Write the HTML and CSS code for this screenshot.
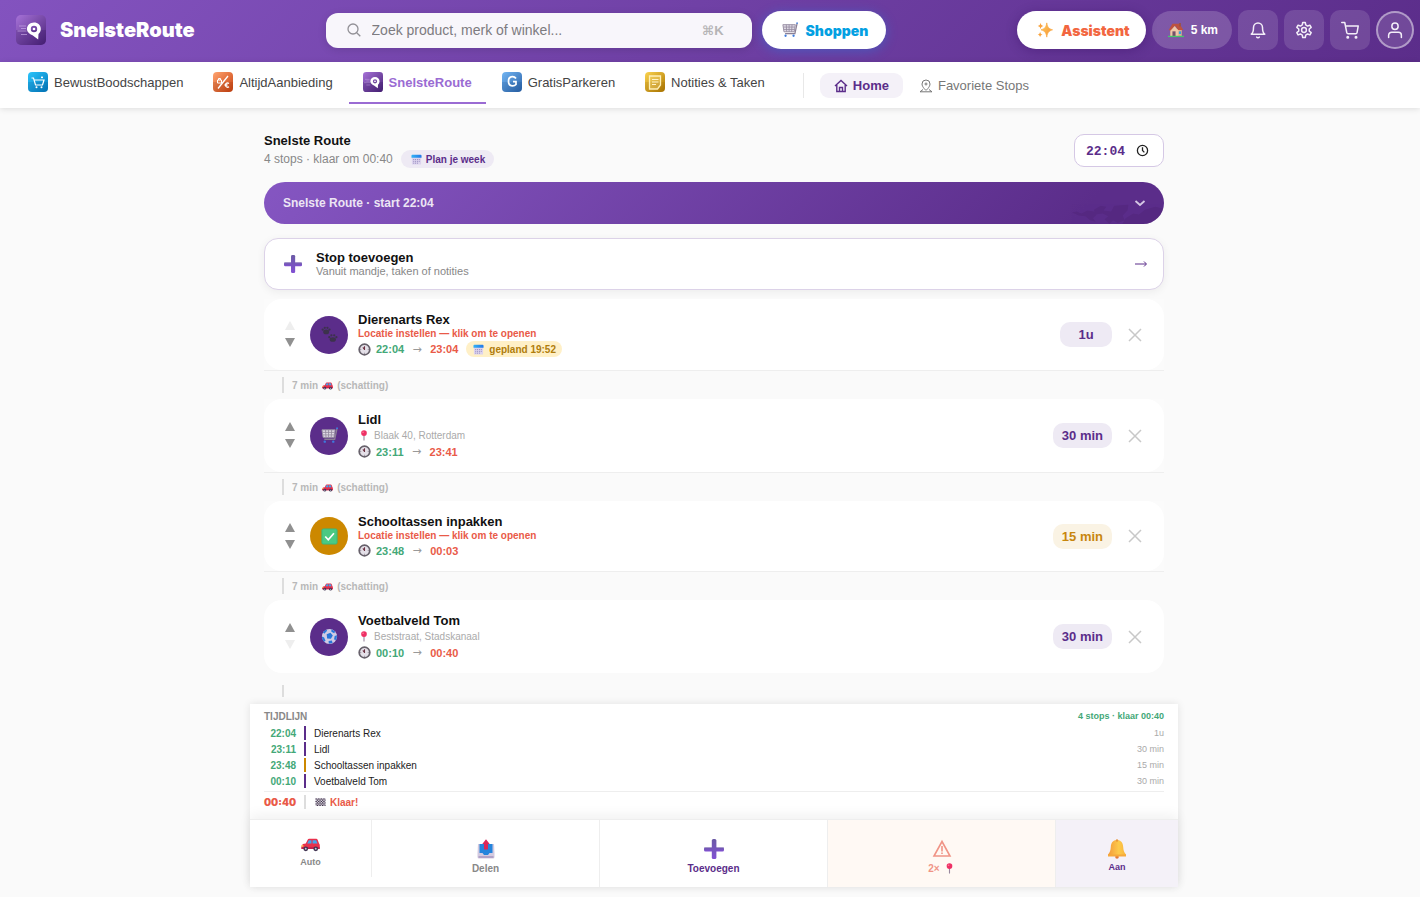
FILE: index.html
```html
<!DOCTYPE html>
<html lang="nl">
<head>
<meta charset="utf-8">
<meta name="viewport" content="width=device-width, initial-scale=1">
<title>SnelsteRoute</title>
<link rel="stylesheet" href="styles.css">
</head>
<body>
<svg class="sprite" aria-hidden="true">
  <defs>
    <linearGradient id="g-purple" x1="0" y1="0" x2="1" y2="1"><stop offset="0" stop-color="#a672d8"/><stop offset="1" stop-color="#4b2378"/></linearGradient>
    <linearGradient id="g-blue" x1="0" y1="0" x2="1" y2="1"><stop offset="0" stop-color="#2cc4fb"/><stop offset="1" stop-color="#0279bd"/></linearGradient>
    <linearGradient id="g-orange" x1="0" y1="0" x2="1" y2="1"><stop offset="0" stop-color="#ffa470"/><stop offset="1" stop-color="#c8400f"/></linearGradient>
    <linearGradient id="g-sky" x1="0" y1="0" x2="1" y2="1"><stop offset="0" stop-color="#72b5f3"/><stop offset="1" stop-color="#2a62a8"/></linearGradient>
    <linearGradient id="g-gold" x1="0" y1="0" x2="1" y2="1"><stop offset="0" stop-color="#fbd34e"/><stop offset="1" stop-color="#ad7600"/></linearGradient>
    <linearGradient id="g-plus" x1="0" y1="0" x2="0" y2="1"><stop offset="0" stop-color="#6b5aa5"/><stop offset="1" stop-color="#8250d4"/></linearGradient>
    <linearGradient id="g-bell" x1="0" y1="0" x2="1" y2="0"><stop offset="0" stop-color="#f39a3c"/><stop offset=".6" stop-color="#fdca4b"/><stop offset="1" stop-color="#f8b33c"/></linearGradient>
    <linearGradient id="g-star" x1="0" y1="0" x2="1" y2="1"><stop offset="0" stop-color="#ffd35c"/><stop offset="1" stop-color="#f58a35"/></linearGradient>
    <linearGradient id="g-cal" x1="0" y1="0" x2="1" y2="0"><stop offset="0" stop-color="#35b3f5"/><stop offset="1" stop-color="#2377e8"/></linearGradient>
  </defs>
  <symbol id="app-route" viewBox="0 0 30 30">
    <rect width="30" height="30" rx="5" fill="url(#g-purple)"/>
    <path d="M0 15h30v10a5 5 0 0 1-5 5H5a5 5 0 0 1-5-5z" fill="#2f0f5c" opacity=".22"/>
    <path d="M3 11h7M5 13.500h5M1.500 16h9M5 19.500h6" stroke="#d3b6ef" stroke-width="1" opacity=".6"/>
    <path fill="#fff" fill-rule="evenodd" d="M18 7.500c-3.900 0-7 2.800-7 6.400 0 3.200 2.600 5 5.500 6.300l5.700 4.300.3-5.400c1.500-1.400 2.300-3.100 2.300-5.200 0-3.800-3-6.400-6.800-6.400zm0 3.300a3.200 3.200 0 1 1 0 6.400 3.200 3.200 0 0 1 0-6.400z"/>
    <circle cx="18" cy="14" r="1.300" fill="#fff"/>
  </symbol>
  <symbol id="app-shop" viewBox="0 0 20 20">
    <rect width="20" height="20" rx="4" fill="url(#g-blue)"/><path d="M0 10h20v6a4 4 0 0 1-4 4H4a4 4 0 0 1-4-4z" fill="#004a88" opacity=".15"/>
    <path d="M3.500 6h2l2 7h7l1.500-5H6.500M14 4.500v1.800M13 5.400h2" fill="none" stroke="#fff" stroke-width="1.200"/><circle cx="8.500" cy="15.200" r="1" fill="#fff"/><circle cx="13.500" cy="15.200" r="1" fill="#fff"/>
  </symbol>
  <symbol id="app-deal" viewBox="0 0 20 20">
    <rect width="20" height="20" rx="4" fill="url(#g-orange)"/><path d="M0 10h20v6a4 4 0 0 1-4 4H4a4 4 0 0 1-4-4z" fill="#7a2000" opacity=".15"/>
    <path d="M15 4 5 16.500" fill="none" stroke="#fff" stroke-width="1.300"/><path d="M4.500 8h4v3h-4zM5.500 8V6.500h2V8" fill="none" stroke="#fff" stroke-width="1"/><path d="M16 11.500c-1.500-1-3.500-.5-3.500 1.500s2 2.800 3.500 1.800M11.500 13h3" fill="none" stroke="#fff" stroke-width="1.300"/>
  </symbol>
  <symbol id="app-park" viewBox="0 0 20 20">
    <rect width="20" height="20" rx="4" fill="url(#g-sky)"/><path d="M0 10h20v6a4 4 0 0 1-4 4H4a4 4 0 0 1-4-4z" fill="#0b3a7a" opacity=".15"/>
    <path d="M14 6.500C13.200 5.300 12 4.600 10.600 4.600 8.100 4.600 6.500 6.400 6.500 9.200s1.600 4.600 4.100 4.600c1.300 0 2.500-.4 3.400-1.300V9.700h-3" fill="none" stroke="#fff" stroke-width="1.700"/>
  </symbol>
  <symbol id="app-note" viewBox="0 0 20 20">
    <rect width="20" height="20" rx="4" fill="url(#g-gold)"/><path d="M0 10h20v6a4 4 0 0 1-4 4H4a4 4 0 0 1-4-4z" fill="#8a5b00" opacity=".15"/>
    <path d="M4.500 4h11v9l-3 4h-8z" fill="#f9dc81" fill-opacity=".35" stroke="#fff0b8" stroke-width="1.300"/><path d="M7 7.500h6.500M7 10h6.500M7 12.500h4" stroke="#fff3c8" stroke-width="1.100"/>
  </symbol>
  <symbol id="e-cart" viewBox="0 0 18 18">
    <path d="M17 1.500 14.500 13H3.500" fill="none" stroke="#8a7f95" stroke-width="1.400"/><path d="M1 3h14l-1.200 8H2.200z" fill="#e0dbe6" stroke="#93899e" stroke-width="1"/>
    <path d="M1.500 5.700h13M2 8.400h12M4.800 3l.5 8M8 3v8M11.300 3l-.5 8" stroke="#93899e" stroke-width=".9"/><circle cx="4" cy="15.500" r="1.300" fill="#3d7bdc"/><circle cx="13" cy="15.500" r="1.300" fill="#3d7bdc"/><path d="M16 1.300h2" stroke="#3d7bdc" stroke-width="1.500"/>
  </symbol>
  <symbol id="e-spark" viewBox="0 0 18 18">
    <path d="M11 1c.9 5 2 6.400 6.500 7.800C13 10.200 11.900 11.800 11 17c-.9-5.200-2-6.800-6.500-8.200C9 7.400 10.100 6 11 1z" fill="url(#g-star)" stroke="#f9a840" stroke-width=".8"/>
    <path d="M4 .8c.5 2.400 1 3 3.200 3.700C5 5.200 4.500 5.800 4 8.200 3.500 5.800 3 5.200.8 4.500 3 3.800 3.500 3.200 4 .8zM3.500 11c.4 2 .9 2.600 2.700 3.100-1.800.6-2.300 1.200-2.700 3-.4-1.800-.9-2.400-2.700-3C2.600 13.600 3.100 13 3.500 11z" fill="#f9a23c"/>
  </symbol>
  <symbol id="e-home" viewBox="0 0 18 18">
    <path d="M2.500 8h13v8h-13z" fill="#dcae91"/><path d="M.8 9 5 2h8l4.200 7h-6L8.500 4.500 3 9.800z" fill="#bd523f"/><path d="M3 9.500 7.500 4.500l4.200 5V16H3z" fill="#efc7a7"/><path d="M5 10.500h3.500V16H5z" fill="#755069"/><path d="M12.200 10.500h2.500v3h-2.500z" fill="#32a6dc"/><path d="M12.500 1h2v4h-2z" fill="#9b5344"/><path d="M0 15.500h18v1.500H0z" fill="#44c76c"/>
  </symbol>
  <symbol id="e-cal" viewBox="0 0 12 12">
    <rect x="1" y="1" width="10" height="10.500" rx="1" fill="#dcd3ee"/><path d="M.5 4V1.800A1 1 0 0 1 1.500.8h9a1 1 0 0 1 1 1V4z" fill="url(#g-cal)"/><path d="M2.500 6h7M2.500 8h7M2.500 10h5" stroke="#8d82b8" stroke-width="1" stroke-dasharray="1 1"/>
  </symbol>
  <symbol id="e-plus" viewBox="0 0 20 20">
    <rect x="0" y="8" width="20" height="4.500" rx="1.500" fill="url(#g-plus)"/><rect x="7.800" y="0" width="4.600" height="20" rx="1.500" fill="url(#g-plus)"/><path d="M1 8.500h6.800M12.400 8.500h6.800" stroke="#a99acd" stroke-width="1"/>
  </symbol>
  <symbol id="e-paws" viewBox="0 0 18 18">
    <g fill="#3c324c"><ellipse cx="5.500" cy="6.300" rx="3.200" ry="2.500"/><circle cx="1.800" cy="3.800" r="1.200"/><circle cx="4" cy="1.900" r="1.200"/><circle cx="6.800" cy="1.900" r="1.200"/><circle cx="9" cy="3.800" r="1.200"/><ellipse cx="12.500" cy="14.300" rx="3.300" ry="2.500"/><circle cx="8.800" cy="11.800" r="1.200"/><circle cx="11" cy="9.900" r="1.200"/><circle cx="14" cy="9.900" r="1.200"/><circle cx="16.300" cy="11.800" r="1.200"/></g>
  </symbol>
  <symbol id="e-check" viewBox="0 0 18 18"><rect x="1" y="1" width="16" height="16" rx="1.500" fill="#4bc983" stroke="#36b67c" stroke-width="1"/><path d="m4.500 9 3.200 3.500 6-7" fill="none" stroke="#fff" stroke-width="1.800"/></symbol>
  <symbol id="e-ball" viewBox="0 0 18 18"><circle cx="9" cy="9" r="8" fill="#cfcbe4"/><path d="m6 6.500 4-1.500 2.500 3-2 3.500-4-.5zM2 4.500 5.500 1.500 6.500 3 3.500 6zM11 1.300l4 2.400-1 1.800-3-1.500zM14.500 8.500l2.500-.8-.8 5-2.400-.5zM1 9l2.300 1 1.500 3.500-1.500 1C1.800 13 1 11 1 9zM8 13.800l3.500-.5.8 2.700-4 .8z" fill="#2875d9"/></symbol>
  <symbol id="e-clock" viewBox="0 0 12 12"><circle cx="6" cy="6" r="4.900" fill="#e4e0e8" stroke="#67616b" stroke-width="1.600"/><path d="M6 6.500V3M6 6 4.500 4" stroke="#6c3142" stroke-width="1"/><path d="M10 6H9M6 10V9M2 6h1" stroke="#8d8792" stroke-width=".8"/></symbol>
  <symbol id="e-pin" viewBox="0 0 12 12"><path d="M6 6v5.500" stroke="#98889e" stroke-width="1.200"/><circle cx="6" cy="3.400" r="3.100" fill="#ee3065"/><circle cx="5" cy="2.500" r=".9" fill="#ff7d98"/></symbol>
  <symbol id="e-car" viewBox="0 0 20 14"><path d="M.5 8 2 6l3-.5L7 1.500Q7.500.5 8.500.5H16q1 0 1.500 1L19 5.500q.8.500.8 2v3q0 .8-1 .8H1.500q-1 0-1-1z" fill="#e8304c"/><path d="M6.500 5.500 8.200 2H11v3.500zM12.200 2H16l1.400 3.500h-5.200z" fill="#42a5ed"/><path d="M.4 9.500h19.400V11H.4z" fill="#b51b4d"/><path d="M.5 7.200h2v1.600h-2z" fill="#ffd052"/><circle cx="5" cy="11" r="2.500" fill="#403351"/><circle cx="15.500" cy="11" r="2.500" fill="#403351"/><circle cx="5" cy="11" r="1" fill="#cac2d4"/><circle cx="15.500" cy="11" r="1" fill="#cac2d4"/></symbol>
  <symbol id="e-flag" viewBox="0 0 12 10"><rect x="1" y="1" width="10" height="8" fill="#d2ccd8"/><path d="M1 2h10M1 4.500h10M1 7h10" stroke="#3c3146" stroke-width="1.200" stroke-dasharray="1.300 1.300"/><path d="M2.300 3.200h8.700M2.300 5.800h8.700M2.300 8.300h8.700" stroke="#3c3146" stroke-width="1.200" stroke-dasharray="1.300 1.300"/></symbol>
  <symbol id="e-out" viewBox="0 0 20 20"><path d="M2 5h16l.5 9v4a1.500 1.500 0 0 1-1.500 1.500H3A1.500 1.500 0 0 1 1.500 18v-4z" fill="#d3cae0"/><path d="M3.500 5h13v9h-3l-1.500 2H8l-1.500-2h-3z" fill="#2484dc"/><path d="M2.500 17h15v2h-15z" fill="#b1a2c7"/><path d="M8 10.500V5H6.300L10 .3 13.700 5H12v5.500z" fill="#db2658"/></symbol>
  <symbol id="e-bell" viewBox="0 0 20 20"><circle cx="10" cy="18" r="1.800" fill="#e37a38"/><path d="M10 1C5.800 1 4 4 3.800 8c-.1 3-1 5.500-2.800 7.500V17h18v-1.500C17.200 13.500 16.300 11 16.200 8 16 4 14.200 1 10 1z" fill="url(#g-bell)"/><path d="M1 15.500h18v2H1z" fill="#f6a93b"/><circle cx="10" cy="1.500" r="1.200" fill="#e9973c"/></symbol>
  <symbol id="i-x" viewBox="0 0 14 14"><path d="m1 1 12 12M13 1 1 13" stroke="currentColor" stroke-width="1.500"/></symbol>
</svg>

<header class="topbar">
  <a class="brand" href="#"><svg class="brand-logo" aria-hidden="true"><use href="#app-route"/></svg><span>SnelsteRoute</span></a>
  <div class="top-center">
    <label class="search">
      <svg class="search-icon" viewBox="0 0 14 14" fill="none" stroke="currentColor" stroke-width="1.300" aria-hidden="true"><circle cx="6" cy="6" r="5"/><path d="m9.700 9.700 3.600 3.600"/></svg>
      <input type="search" placeholder="Zoek product, merk of winkel..." aria-label="Zoeken">
      <kbd>⌘K</kbd>
    </label>
    <button class="pill pill-shop" type="button"><svg aria-hidden="true"><use href="#e-cart"/></svg>Shoppen</button>
  </div>
  <div class="top-right">
    <button class="pill pill-assist" type="button"><svg aria-hidden="true"><use href="#e-spark"/></svg>Assistent</button>
    <button class="pill-range" type="button"><svg aria-hidden="true"><use href="#e-home"/></svg>5 km</button>
    <button class="icon-btn" type="button" aria-label="Meldingen"><svg viewBox="0 0 24 24"><path d="M18 8.500a6 6 0 0 0-12 0c0 7-3 9-3 9h18s-3-2-3-9M13.700 21.500a2 2 0 0 1-3.400 0"/></svg></button>
    <button class="icon-btn" type="button" aria-label="Instellingen"><svg viewBox="0 0 24 24"><circle cx="12" cy="12" r="3.200"/><path d="M9.700 5.300 10.300 2h3.400l.6 3.300 2.400 1.400 3.200-1.100 1.700 2.900-2.600 2.200v2.700l2.600 2.100-1.700 3-3.200-1.200-2.400 1.400-.6 3.300h-3.400l-.6-3.300-2.400-1.400-3.200 1.200-1.700-3L5 13.400v-2.700L2.400 8.500l1.700-2.900 3.200 1.100z"/></svg></button>
    <button class="icon-btn" type="button" aria-label="Winkelwagen"><svg viewBox="0 0 24 24"><path d="M1 2h4l2.700 13.400a2 2 0 0 0 2 1.600h9.700a2 2 0 0 0 2-1.600L23 6.500H6"/><circle cx="9" cy="21.500" r="1"/><circle cx="20" cy="21.500" r="1"/></svg></button>
    <button class="avatar" type="button" aria-label="Profiel"><svg viewBox="0 0 24 24"><circle cx="12" cy="7" r="4.200"/><path d="M3.500 22v-3a4 4 0 0 1 4-4h9a4 4 0 0 1 4 4v3"/></svg></button>
  </div>
</header>

<nav class="navbar">
  <div class="tabs">
    <a class="tab" href="#"><svg aria-hidden="true"><use href="#app-shop"/></svg>BewustBoodschappen</a>
    <a class="tab" href="#"><svg aria-hidden="true"><use href="#app-deal"/></svg>AltijdAanbieding</a>
    <a class="tab active" href="#" aria-current="page"><svg aria-hidden="true"><use href="#app-route"/></svg>SnelsteRoute</a>
    <a class="tab" href="#"><svg aria-hidden="true"><use href="#app-park"/></svg>GratisParkeren</a>
    <a class="tab" href="#"><svg aria-hidden="true"><use href="#app-note"/></svg>Notities &amp; Taken</a>
  </div>
  <div class="subnav">
    <a class="sub active" href="#"><svg viewBox="0 0 14 14" aria-hidden="true"><path d="M1 7 7 1.500 13 7M2.800 6v6.500h8.400V6M5.500 12.500V8.500h3v4"/></svg>Home</a>
    <a class="sub" href="#"><svg viewBox="0 0 14 14" aria-hidden="true"><path d="M7 11.500S3 8 3 5a4 4 0 0 1 8 0c0 3-4 6.500-4 6.500zM4 10.500 1 12.800h12l-3-2.300"/><circle cx="7" cy="5" r="1"/></svg>Favoriete Stops</a>
  </div>
</nav>

<main class="page">
  <div class="content">
    <section class="intro">
      <div>
        <h1>Snelste Route</h1>
        <div class="intro-sub"><span>4 stops · klaar om 00:40</span><button class="plan" type="button"><svg aria-hidden="true"><use href="#e-cal"/></svg>Plan je week</button></div>
      </div>
      <label class="time-box">
        <input type="text" value="22:04" inputmode="numeric" aria-label="Starttijd">
        <svg viewBox="0 0 14 14" aria-hidden="true"><circle cx="7" cy="7" r="5.500"/><path d="M7 3.500V7l2 2"/></svg>
      </label>
    </section>

    <button class="banner" type="button">
      <span>Snelste Route · start 22:04</span>
      <svg class="banner-map" viewBox="0 0 100 24" aria-hidden="true"><path d="m4 12 5-1 5 2 6-3 7 1 3 3-4 4 3 4-6-2-5-4-7-1zM27 9l7-4 6 1-3 4 8 1 3-6 15-1-1 6-5 5 2 5-7 3-5-3-4 4-5-5 4-3-6-3-8 1zM60 18l8-5 6 1 6-5 11-3 9 2v17H56z"/></svg>
      <svg class="chev" viewBox="0 0 12 12" aria-hidden="true"><path d="m1.500 4 4.500 4 4.500-4"/></svg>
    </button>

    <button class="add-card" type="button">
      <svg class="add-plus" aria-hidden="true"><use href="#e-plus"/></svg>
      <span class="add-text"><strong>Stop toevoegen</strong><span>Vanuit mandje, taken of notities</span></span>
      <svg class="add-arrow" viewBox="0 0 12 8" aria-hidden="true"><path d="M0 4h11M9 1.500 11.500 4 9 6.500"/></svg>
    </button>

    <ol class="stops">
      <li class="stop">
        <div class="stop-card">
          <div class="order"><button type="button" disabled aria-label="Omhoog"><svg viewBox="0 0 10 10"><path d="M5 0 10 9H0z"/></svg></button><button type="button" aria-label="Omlaag"><svg viewBox="0 0 10 10"><path d="M0 0h10L5 9z"/></svg></button></div>
          <span class="avatar-stop"><svg aria-hidden="true"><use href="#e-paws"/></svg></span>
          <div class="stop-body">
            <h2>Dierenarts Rex</h2>
            <a class="warn" href="#">Locatie instellen — klik om te openen</a>
            <div class="times"><svg aria-hidden="true"><use href="#e-clock"/></svg><b class="from">22:04</b><i>→</i><b class="to">23:04</b><span class="planned"><svg aria-hidden="true"><use href="#e-cal"/></svg>gepland 19:52</span></div>
          </div>
          <button class="duration" type="button">1u</button>
          <button class="remove" type="button" aria-label="Verwijderen"><svg><use href="#i-x"/></svg></button>
        </div>
      </li>
      <li class="leg"><span>7 min <svg aria-hidden="true"><use href="#e-car"/></svg> (schatting)</span></li>
      <li class="stop">
        <div class="stop-card">
          <div class="order"><button type="button" aria-label="Omhoog"><svg viewBox="0 0 10 10"><path d="M5 0 10 9H0z"/></svg></button><button type="button" aria-label="Omlaag"><svg viewBox="0 0 10 10"><path d="M0 0h10L5 9z"/></svg></button></div>
          <span class="avatar-stop"><svg aria-hidden="true"><use href="#e-cart"/></svg></span>
          <div class="stop-body">
            <h2>Lidl</h2>
            <div class="address"><svg aria-hidden="true"><use href="#e-pin"/></svg>Blaak 40, Rotterdam</div>
            <div class="times"><svg aria-hidden="true"><use href="#e-clock"/></svg><b class="from">23:11</b><i>→</i><b class="to">23:41</b></div>
          </div>
          <button class="duration" type="button">30 min</button>
          <button class="remove" type="button" aria-label="Verwijderen"><svg><use href="#i-x"/></svg></button>
        </div>
      </li>
      <li class="leg"><span>7 min <svg aria-hidden="true"><use href="#e-car"/></svg> (schatting)</span></li>
      <li class="stop">
        <div class="stop-card">
          <div class="order"><button type="button" aria-label="Omhoog"><svg viewBox="0 0 10 10"><path d="M5 0 10 9H0z"/></svg></button><button type="button" aria-label="Omlaag"><svg viewBox="0 0 10 10"><path d="M0 0h10L5 9z"/></svg></button></div>
          <span class="avatar-stop task"><svg aria-hidden="true"><use href="#e-check"/></svg></span>
          <div class="stop-body">
            <h2>Schooltassen inpakken</h2>
            <a class="warn" href="#">Locatie instellen — klik om te openen</a>
            <div class="times"><svg aria-hidden="true"><use href="#e-clock"/></svg><b class="from">23:48</b><i>→</i><b class="to">00:03</b></div>
          </div>
          <button class="duration task" type="button">15 min</button>
          <button class="remove" type="button" aria-label="Verwijderen"><svg><use href="#i-x"/></svg></button>
        </div>
      </li>
      <li class="leg"><span>7 min <svg aria-hidden="true"><use href="#e-car"/></svg> (schatting)</span></li>
      <li class="stop last">
        <div class="stop-card">
          <div class="order"><button type="button" aria-label="Omhoog"><svg viewBox="0 0 10 10"><path d="M5 0 10 9H0z"/></svg></button><button type="button" disabled aria-label="Omlaag"><svg viewBox="0 0 10 10"><path d="M0 0h10L5 9z"/></svg></button></div>
          <span class="avatar-stop"><svg aria-hidden="true"><use href="#e-ball"/></svg></span>
          <div class="stop-body">
            <h2>Voetbalveld Tom</h2>
            <div class="address"><svg aria-hidden="true"><use href="#e-pin"/></svg>Beststraat, Stadskanaal</div>
            <div class="times"><svg aria-hidden="true"><use href="#e-clock"/></svg><b class="from">00:10</b><i>→</i><b class="to">00:40</b></div>
          </div>
          <button class="duration" type="button">30 min</button>
          <button class="remove" type="button" aria-label="Verwijderen"><svg><use href="#i-x"/></svg></button>
        </div>
      </li>
      <li class="leg-end"></li>
    </ol>
  </div>

  <section class="dock">
    <div class="timeline">
      <div class="tl-head"><h3>TIJDLIJN</h3><span>4 stops · klaar 00:40</span></div>
      <ol>
        <li><time>22:04</time><span class="tl-name">Dierenarts Rex</span><span class="tl-dur">1u</span></li>
        <li><time>23:11</time><span class="tl-name">Lidl</span><span class="tl-dur">30 min</span></li>
        <li class="task"><time>23:48</time><span class="tl-name">Schooltassen inpakken</span><span class="tl-dur">15 min</span></li>
        <li><time>00:10</time><span class="tl-name">Voetbalveld Tom</span><span class="tl-dur">30 min</span></li>
      </ol>
      <div class="tl-done"><time>00:40</time><span class="tl-name"><svg aria-hidden="true"><use href="#e-flag"/></svg>Klaar!</span></div>
    </div>
    <div class="actions">
      <button class="act small" type="button"><svg class="car" aria-hidden="true"><use href="#e-car"/></svg><span>Auto</span></button>
      <button class="act" type="button"><svg aria-hidden="true"><use href="#e-out"/></svg><span>Delen</span></button>
      <button class="act add" type="button"><svg aria-hidden="true"><use href="#e-plus"/></svg><span>Toevoegen</span></button>
      <button class="act alert" type="button"><svg viewBox="0 0 20 20" aria-hidden="true"><path d="M10 2.500 18 17H2zM10 7v5.500M10 13.500v1.500" fill="none" stroke="#f09486" stroke-width="1.600"/></svg><span>2× <svg class="mini" aria-hidden="true"><use href="#e-pin"/></svg></span></button>
      <button class="act on" type="button"><svg aria-hidden="true"><use href="#e-bell"/></svg><span>Aan</span></button>
    </div>
  </section>
</main>
</body>
</html>
```
FILE: styles.css
```css
:root {
  --purple: #5b2d8a;
  --lilac: #eeeaf4;
  --gold: #cc8800;
  --green: #43a877;
  --red: #e95a48;
}

* { box-sizing: border-box; }

body {
  margin: 0;
  background: #fafafa;
  color: #111;
  font-family: "Liberation Sans", Arial, sans-serif;
  font-size: 13px;
}

button, input { font: inherit; color: inherit; }
button { border: 0; padding: 0; background: none; cursor: pointer; }
a { color: inherit; text-decoration: none; }
h1, h2, h3, ol { margin: 0; padding: 0; }
ol { list-style: none; }
svg { flex: none; }
.sprite { position: absolute; width: 0; height: 0; }

/* Top bar */
.topbar {
  display: flex;
  align-items: center;
  justify-content: space-between;
  height: 62px;
  padding: 0 6px 2px 16px;
  background: linear-gradient(135deg, #8353bf, #5b2d8a);
}
.brand {
  display: flex;
  align-items: center;
  gap: 14px;
  color: #fff;
  font: 900 20px Inter, "Liberation Sans", sans-serif;
}
.brand-logo { width: 30px; height: 30px; }
.top-center { display: flex; align-items: center; gap: 10px; }
.search {
  display: flex;
  align-items: center;
  width: 426px;
  height: 35px;
  padding: 0 28px 0 21px;
  border-radius: 12px;
  background: #f8f6fb;
  box-shadow: 0 2px 8px rgba(0, 0, 0, .12);
}
.search-icon { width: 14px; height: 14px; color: #929096; }
.search input {
  flex: 1;
  min-width: 0;
  margin-left: 11px;
  padding: 0;
  border: 0;
  outline: 0;
  background: none;
  font-size: 14px;
}
.search input::placeholder { color: #7d7b80; opacity: 1; }
.search kbd { color: #b5b4b6; font: 700 13px "Liberation Sans", "DejaVu Sans", sans-serif; }
.pill {
  display: flex;
  align-items: center;
  gap: 8px;
  height: 38px;
  padding: 0 18px 0 20px;
  border-radius: 19px;
  background: #fff;
  font: 900 14px Inter, "Liberation Sans", sans-serif;
}
.pill svg { width: 16px; height: 16px; }
.pill-shop { color: #03a0e2; box-shadow: 0 2px 12px rgba(30, 130, 230, .4); }
.pill-assist { padding-right: 16px; color: #f2663f; box-shadow: 0 2px 12px rgba(40, 0, 80, .3); }
.top-right { display: flex; align-items: center; gap: 6px; }
.pill-range {
  display: flex;
  align-items: center;
  gap: 7px;
  height: 38px;
  padding: 0 14px 0 16px;
  border-radius: 19px;
  background: rgba(255, 255, 255, .18);
  color: #fff;
  font-size: 12px;
  font-weight: 700;
}
.pill-range svg { width: 16px; height: 16px; }
.icon-btn, .avatar {
  display: grid;
  place-items: center;
  width: 40px;
  height: 40px;
  border-radius: 10px;
  background: rgba(255, 255, 255, .13);
}
.icon-btn svg, .avatar svg {
  width: 18px;
  height: 18px;
  fill: none;
  stroke: #f3eef8;
  stroke-width: 2;
  stroke-linecap: round;
  stroke-linejoin: round;
}
.avatar { width: 38px; height: 38px; border: 2px solid rgba(255, 255, 255, .45); border-radius: 50%; }

/* Navigation */
.navbar {
  display: flex;
  align-items: flex-start;
  height: 46px;
  padding-left: 14px;
  background: #fff;
  box-shadow: 0 1px 6px rgba(0, 0, 0, .12);
}
.tabs { display: flex; gap: 2px; }
.tab {
  display: flex;
  align-items: center;
  gap: 6px;
  height: 42px;
  padding: 0 14px;
  border-bottom: 2px solid transparent;
  color: #444;
}
.tab svg { width: 20px; height: 20px; }
.tab.active { border-color: #9a6bd3; color: #9a6bd3; font-weight: 700; }
.subnav {
  display: flex;
  gap: 2px;
  height: 25px;
  margin: 11px 0 0 24px;
  padding-left: 16px;
  border-left: 1px solid #e8e8e8;
}
.sub { display: flex; align-items: center; gap: 5px; padding: 0 14px; border-radius: 9px; color: #777; }
.sub svg { width: 14px; height: 14px; fill: none; stroke: currentColor; stroke-width: 1; }
.sub.active { background: #f4f1f8; color: var(--purple); font-weight: 700; }
.sub.active svg { stroke-width: 1.4; }

/* Page */
.page { max-width: 936px; margin: 0 auto; padding: 26px 0 10px 8px; }
.content { padding: 0 14px; }
.intro { display: flex; justify-content: space-between; align-items: flex-start; margin-bottom: 15px; }
.intro h1 { font-size: 13px; line-height: 14px; }
.intro-sub { display: flex; align-items: center; gap: 8px; margin-top: 2px; color: #888; font-size: 12px; }
.plan {
  display: flex;
  align-items: center;
  gap: 4px;
  height: 18px;
  padding: 0 9px 0 10px;
  border-radius: 9px;
  background: var(--lilac);
  color: var(--purple);
  font-size: 10px;
  font-weight: 700;
}
.plan svg { width: 11px; height: 11px; }
.time-box {
  display: flex;
  align-items: center;
  justify-content: space-between;
  width: 90px;
  height: 33px;
  padding: 0 14px 0 11px;
  border: 1px solid #d5c8e5;
  border-radius: 10px;
  background: #fff;
}
.time-box input {
  width: 44px;
  padding: 1px 0 0;
  border: 0;
  outline: 0;
  background: none;
  color: var(--purple);
  font: 700 13px "Liberation Mono", monospace;
}
.time-box svg { width: 13px; height: 13px; fill: none; stroke: #222; stroke-width: 1.4; }

.banner {
  position: relative;
  display: flex;
  align-items: center;
  justify-content: space-between;
  width: 100%;
  height: 42px;
  margin: -1px 0 14px;
  padding: 0 18px 0 19px;
  overflow: hidden;
  border-radius: 21px;
  background: linear-gradient(135deg, #8556c2, #5b2d8a 90%);
  color: #ece5f4;
  font-size: 12px;
  font-weight: 700;
}
.banner-map { position: absolute; right: 0; bottom: 0; width: 96px; height: 23px; fill: #4a2070; opacity: .35; }
.banner .chev { position: relative; width: 12px; height: 12px; fill: none; stroke: #d5c7e4; stroke-width: 1.8; }

.add-card {
  display: flex;
  align-items: center;
  width: 100%;
  height: 52px;
  margin-bottom: 9px;
  padding: 0 16px 0 19px;
  border: 1px solid #dcd2e8;
  border-radius: 14px;
  background: #fff;
  box-shadow: 0 2px 8px rgba(0, 0, 0, .06);
  text-align: left;
}
.add-plus { width: 18px; height: 18px; }
.add-text { display: grid; flex: 1; margin-left: 14px; }
.add-text strong { font-size: 13px; line-height: 14px; }
.add-text span { color: #888; font-size: 11px; line-height: 13px; }
.add-arrow { width: 12px; height: 8px; fill: none; stroke: var(--purple); stroke-width: 1; }

/* Stops */
.stop { border-bottom: 1px solid #eee; background: #fbfbfb; }
.stop.last { border-bottom-color: transparent; background: none; }
.stop-card {
  display: flex;
  align-items: center;
  padding: 12px 18px 12px 20px;
  border-radius: 18px;
  background: #fff;
}
.order { display: grid; gap: 7px; width: 11px; margin-right: 15px; }
.order button { display: grid; place-items: center; }
.order svg { width: 10px; height: 10px; fill: #909090; }
.order button:disabled { opacity: .15; }
.avatar-stop {
  display: grid;
  place-items: center;
  flex: none;
  width: 38px;
  height: 38px;
  margin-right: 10px;
  border-radius: 50%;
  background: var(--purple);
}
.avatar-stop.task { background: var(--gold); }
.avatar-stop svg { width: 17px; height: 17px; }
.stop-body { flex: 1; }
.stop-body h2 { font-size: 13px; line-height: 17px; }
.warn { display: block; color: var(--red); font-size: 10px; font-weight: 700; line-height: 12px; }
.address { display: flex; align-items: center; gap: 4px; height: 15px; color: #aaa; font-size: 10px; }
.address svg { width: 12px; height: 11px; }
.times { display: flex; align-items: center; gap: 5px; min-height: 17px; font-size: 11px; }
.times > svg { width: 13px; height: 13px; }
.times i { width: 16px; color: #999; font: 11px "DejaVu Sans", sans-serif; text-align: center; }
.from { color: var(--green); }
.to { color: var(--red); }
.planned {
  display: flex;
  align-items: center;
  gap: 5px;
  height: 16px;
  margin: 1px 0 1px 3px;
  padding: 0 6px 0 7px;
  border-radius: 8px;
  background: #fff0c7;
  color: #b07d0c;
  font-size: 10px;
  font-weight: 700;
}
.planned svg { width: 11px; height: 11px; }
.duration {
  min-width: 52px;
  height: 25px;
  padding: 0 9px;
  border-radius: 10px;
  background: var(--lilac);
  color: var(--purple);
  font-size: 13px;
  font-weight: 700;
}
.duration.task { background: #faf3e4; color: #c8860d; }
.remove { display: grid; place-items: center; width: 22px; height: 22px; margin-left: 12px; color: #c8c8c8; }
.remove svg { width: 14px; height: 14px; }
.leg { height: 28px; padding: 6px 0 6px 18px; }
.leg span {
  display: flex;
  align-items: center;
  gap: 4px;
  height: 16px;
  padding-left: 8px;
  border-left: 2px solid #ddd;
  color: #b8b8b8;
  font-size: 10px;
  font-weight: 700;
}
.leg svg { width: 11px; height: 8px; margin-top: 2px; }
.leg-end { height: 12px; margin: 11px 0 7px 18px; border-left: 2px solid #ddd; }

/* Bottom dock */
.dock { background: #fff; box-shadow: 0 0 8px rgba(0, 0, 0, .1); }
.timeline { padding: 5px 14px 9px; }
.tl-head { display: flex; justify-content: space-between; align-items: center; height: 14px; }
.tl-head h3 { color: #888; font-size: 10px; }
.tl-head span { color: var(--green); font-size: 9px; font-weight: 700; }
.timeline li, .tl-done { display: flex; align-items: center; height: 16px; font-size: 10px; }
.timeline ol { padding: 2px 0; border-bottom: 1px solid #eee; }
.timeline time { width: 40px; padding-right: 8px; color: var(--green); font-weight: 700; text-align: right; }
.tl-name {
  display: flex;
  align-items: center;
  flex: 1;
  gap: 4px;
  height: 14px;
  padding-left: 8px;
  border-left: 2px solid var(--purple);
  color: #222;
}
.task .tl-name { border-color: var(--gold); }
.tl-dur { color: #aaa; font-size: 9px; }
.tl-done { margin-top: 2px; }
.timeline .tl-done time { color: var(--red); font: 900 10px Inter, "Liberation Sans", sans-serif; }
.tl-done .tl-name { gap: 3px; border-color: #ddd; color: var(--red); font-weight: 700; }
.tl-done svg { width: 13px; height: 10px; }
.actions {
  display: grid;
  grid-template-columns: 122px 1fr 1fr 1fr 122px;
  align-items: start;
  border-top: 1px solid #eee;
  box-shadow: 0 -4px 12px rgba(0, 0, 0, .06);
}
.act {
  display: flex;
  flex-direction: column;
  align-items: center;
  justify-content: center;
  gap: 4px;
  height: 67px;
  padding-top: 6px;
  border-right: 1px solid #eee;
  color: #888;
  font-size: 10px;
  font-weight: 700;
}
.act > svg { width: 20px; height: 20px; }
.act > span { display: flex; align-items: center; gap: 4px; line-height: 12px; }
.act.small { height: 57px; padding-top: 8px; }
.act > .car { width: 19px; height: 14px; }
.act.small, .act.on { font-size: 9px; }
.act.add { color: var(--purple); }
.act.alert { background: #fff9f4; color: #f09486; }
.act .mini { width: 11px; height: 11px; }
.act.on { gap: 2px; padding-top: 5px; border-right: 0; background: #f4f1f8; color: var(--purple); }
```
